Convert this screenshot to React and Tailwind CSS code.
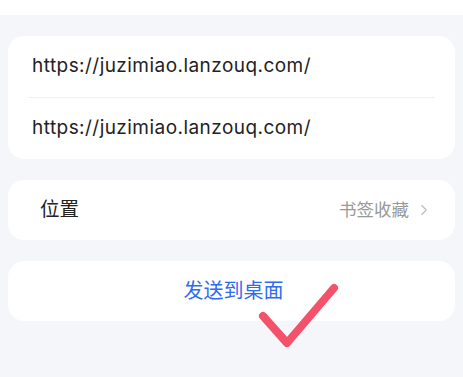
import { ChevronRight } from "lucide-react";

const font = { fontFamily: '"Inter", "Noto Sans CJK SC", sans-serif' };

export default function App() {
  return (
    <div className="relative h-[377px] w-[463px] overflow-hidden bg-[#f5f6fa]" style={font}>
      <div className="h-[15px] bg-white" />
      <div className="flex flex-col gap-[21px] px-[8px] pt-[21px]">
        <div className="rounded-[16px] bg-white">
          <div className="flex h-[61px] items-center pl-[24px] text-[19px] tracking-[0.45px] text-[#222]">
            https://juzimiao.lanzouq.com/
          </div>
          <div className="mx-[20px] h-px bg-[#f0f0f2]" />
          <div className="flex h-[61px] items-center pl-[24px] text-[19px] tracking-[0.45px] text-[#222]">
            https://juzimiao.lanzouq.com/
          </div>
        </div>
        <div className="flex h-[60px] items-center justify-between rounded-[16px] bg-white pl-[32px] pr-[22px]">
          <span className="text-[19.5px] text-[#222]">位置</span>
          <span className="flex items-center gap-[6px] text-[17.5px] text-[#999]">
            书签收藏
            <ChevronRight size={18} strokeWidth={1.5} className="text-[#bbb]" />
          </span>
        </div>
        <div className="flex h-[60px] items-center justify-center rounded-[16px] bg-white">
          <span className="ml-[4px] text-[20px] text-[#2f6bf0]">发送到桌面</span>
        </div>
      </div>
      <svg className="absolute left-0 top-0" width="463" height="377">
        <polyline
          points="263,316 287,343 334,288"
          fill="none"
          stroke="#f4516a"
          strokeWidth="8"
          strokeLinecap="round"
          strokeLinejoin="round"
        />
      </svg>
    </div>
  );
}
